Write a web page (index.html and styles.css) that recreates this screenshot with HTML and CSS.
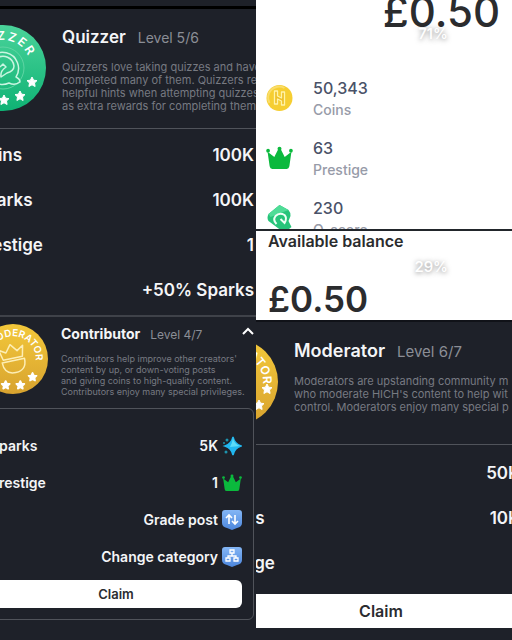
FILE: index.html
```
<!DOCTYPE html>
<html lang="en">
<head>
  <title>Levels and rewards</title>
  <meta charset="utf-8">
  <meta name="viewport" content="width=device-width, initial-scale=1">
  <link rel="stylesheet" href="styles.css">
</head>
<body>
    <svg width="0" height="0" class="sprite" aria-hidden="true">
        <defs>
            <linearGradient id="green" x1="0" y1="0" x2="0" y2="1">
                <stop offset="0" stop-color="#4ad39a"/>
                <stop offset="1" stop-color="#0fb274"/>
            </linearGradient>
            <linearGradient id="gold" x1="0" y1="0" x2="0" y2="1">
                <stop offset="0" stop-color="#f3c83a"/>
                <stop offset="1" stop-color="#d8a32f"/>
            </linearGradient>
            <linearGradient id="blue" x1="0" y1="0" x2="0" y2="1">
                <stop offset="0" stop-color="#84b6f5"/>
                <stop offset="1" stop-color="#4c86dc"/>
            </linearGradient>
            <path id="arc" d="M16.700 52.600 A28 28 0 1 1 69.300 52.600"/>
            <path id="star" d="M0 -5 L1.6 -1.8 L5 -1.4 L2.5 1 L3.1 4.5 L0 2.8 L-3.1 4.5 L-2.5 1 L-5 -1.4 L-1.6 -1.8 Z" stroke-linejoin="round"/>
            <symbol id="crown" viewBox="0 0 26 22">
                <path d="M1.500 5 L8 10 L12 2 H14 L18 10 L24.500 5 L22.500 19 Q22 21.500 20 21.500 H6 Q4 21.500 3.500 19 Z"/>
                <circle cx="2" cy="4" r="1.800"/>
                <circle cx="13" cy="2" r="1.900"/>
                <circle cx="24" cy="4" r="1.800"/>
            </symbol>
        </defs>
    </svg>

    <main class="board">
        <div class="column">
            <section class="panel quizzer">
                <header class="role">
                    <svg class="medal" viewBox="0 0 86 86" aria-hidden="true">
                        <circle cx="43" cy="43" r="43" fill="url(#green)"/>
                        <circle cx="43" cy="43" r="21" fill="none" stroke="#5fd5a4" stroke-width="1"/>
                        <text class="medal-text spaced"><textPath href="#arc" startOffset="50%" text-anchor="middle">QUIZZER</textPath></text>
                        <g fill="none" stroke="#c9f5e1" stroke-width="1.500" stroke-linejoin="round">
                            <path d="M56 52 A16 16 0 1 0 49 58 Q55 61 60 57 Q60 54 56 52 Z"/>
                            <path d="M40 42 L43 39 L46 42 Q40 46 41 52 L47 48 Q54 46 54 41 A11 11 0 1 0 38 52"/>
                        </g>
                        <g fill="#fff" stroke="#fff">
                            <use href="#star" x="15" y="57"/>
                            <use href="#star" x="26" y="71"/>
                            <use href="#star" x="44" y="75"/>
                            <use href="#star" x="60" y="71"/>
                            <use href="#star" x="72" y="57"/>
                        </g>
                    </svg>
                    <div class="role-text">
                        <div class="role-title">
                            <h2>Quizzer</h2>
                            <span class="level">Level 5/6</span>
                        </div>
                        <p>Quizzers love taking quizzes and have<br>completed many of them. Quizzers re<br>helpful hints when attempting quizzes<br>as extra rewards for completing them</p>
                    </div>
                </header>
                <ul class="rewards">
                    <li><span>Coins</span><b>100K</b></li>
                    <li><span>Sparks</span><b>100K</b></li>
                    <li><span>Prestige</span><b>1</b></li>
                    <li><span></span><b>+50% Sparks</b></li>
                </ul>
            </section>

            <section class="panel contributor">
                <header class="role">
                    <svg class="medal" viewBox="0 0 86 86" aria-hidden="true">
                        <circle cx="43" cy="43" r="43" fill="url(#gold)"/>
                        <text class="medal-text" transform="rotate(16 43 43)"><textPath href="#arc" startOffset="50%" text-anchor="middle">MODERATOR</textPath></text>
                        <g fill="none" stroke="#fdeeb5" stroke-width="1.800" stroke-linejoin="round" transform="rotate(-12 43 43)">
                            <path d="M31 42 L28 29 L36 34 L43 25 L50 34 L58 29 L55 42 Z"/>
                            <path d="M29 45 H57 Q57 60 43 60 Q29 60 29 45 Z"/>
                        </g>
                        <g fill="#fff" stroke="#fff" stroke-width="2">
                            <use href="#star" x="17" y="65"/>
                            <use href="#star" x="34" y="75"/>
                            <use href="#star" x="52" y="75"/>
                            <use href="#star" x="67" y="65"/>
                        </g>
                    </svg>
                    <div class="role-text">
                        <div class="role-title">
                            <h2>Contributor</h2>
                            <span class="level">Level 4/7</span>
                            <button class="collapse" type="button" aria-label="Collapse">
                                <svg viewBox="0 0 12 8" aria-hidden="true"><path d="M1 7 L6 2 L11 7" fill="none" stroke="#fff" stroke-width="2"/></svg>
                            </button>
                        </div>
                        <p>Contributors help improve other creators'<br>content by up, or down-voting posts<br>and giving coins to high-quality content.<br>Contributors enjoy many special privileges.</p>
                    </div>
                </header>
                <div class="card">
                    <ul class="rewards">
                        <li><span>Sparks</span><b>5K</b>
                            <svg class="icon" viewBox="0 0 20 20" aria-hidden="true">
                                <path d="M11 1 Q12.500 8 19 10 Q12.500 12 11 19 Q9.500 12 3 10 Q9.500 8 11 1 Z" fill="#22b8f0" stroke="#22b8f0" stroke-width="1.500"/>
                                <path d="M11 2 Q12 8 18 10 L8 11 Q10 8 11 2 Z" fill="#5cdcf8"/>
                                <circle cx="5" cy="4" r="1.500" fill="#1d93ad"/><circle cx="2" cy="7" r="1" fill="#1d93ad"/><circle cx="4" cy="16" r="1.500" fill="#1d93ad"/>
                            </svg>
                        </li>
                        <li><span>Prestige</span><b>1</b>
                            <svg class="icon green" aria-hidden="true"><use href="#crown"/></svg>
                        </li>
                        <li><span></span><b>Grade post</b>
                            <svg class="icon" viewBox="0 0 20 20" aria-hidden="true">
                                <path d="M3 0 H17 Q20 0 20 3 V13 Q20 17 15 18 L10 20 L5 18 Q0 17 0 13 V3 Q0 0 3 0 Z" fill="url(#blue)"/>
                                <path d="M7 14 V5 M4 8 L7 5 L10 8 M13 5 V14 M10 11 L13 14 L16 11" fill="none" stroke="#fff" stroke-width="1.600"/>
                            </svg>
                        </li>
                        <li><span></span><b>Change category</b>
                            <svg class="icon" viewBox="0 0 20 20" aria-hidden="true">
                                <path d="M3 0 H17 Q20 0 20 3 V13 Q20 17 15 18 L10 20 L5 18 Q0 17 0 13 V3 Q0 0 3 0 Z" fill="url(#blue)"/>
                                <path d="M8 3 H12 V6 H8 Z M4 11 H8 V14 H4 Z M12 11 H16 V14 H12 Z M10 6 V9 M6 11 V9 H14 V11" fill="none" stroke="#fff" stroke-width="1.300"/>
                            </svg>
                        </li>
                    </ul>
                    <button class="claim" type="button">Claim</button>
                </div>
            </section>
        </div>

        <div class="column">
            <section class="earnings">
                <strong class="total">£0.50</strong>
                <span class="percent">71%</span>
                <ul class="stats">
                    <li>
                        <svg class="stat-icon" viewBox="0 0 26 26" aria-hidden="true">
                            <circle cx="13" cy="13" r="13" fill="#f6ce31"/>
                            <path d="M3 18 A11 11 0 0 1 18 3" fill="none" stroke="#f9dd6b" stroke-width="2"/>
                            <path d="M8 6 H11 V11 L15 13 V7 H18 V20 H15 V16 L11 14 V19 H8 Z" fill="#eec02a" stroke="#fff3a8" stroke-width="1.300" stroke-linejoin="round"/>
                        </svg>
                        <div><b>50,343</b><span>Coins</span></div>
                    </li>
                    <li>
                        <svg class="stat-icon green" aria-hidden="true"><use href="#crown"/></svg>
                        <div><b>63</b><span>Prestige</span></div>
                    </li>
                    <li>
                        <svg class="stat-icon" viewBox="0 0 26 26" aria-hidden="true">
                            <path d="M13 0 L22 5 Q24 7 24 11 L22 16 L25 22 L20 26 L14 25 L2 16 Q0 13 2 9 Z" fill="#27c47a"/>
                            <path d="M13 0 L22 5 L4 12 L2 9 Z" fill="#4fdc97"/>
                            <path d="M10 19 Q6 15 9 11 Q13 7 18 10 Q21 13 18 18 L14 14" fill="none" stroke="#effff6" stroke-width="2"/>
                        </svg>
                        <div><b>230</b><span>Q-score</span></div>
                    </li>
                </ul>
            </section>

            <section class="balance">
                <h2>Available balance</h2>
                <span class="percent">29%</span>
                <strong>£0.50</strong>
            </section>

            <section class="panel moderator">
                <header class="role">
                    <svg class="medal" viewBox="0 0 86 86" aria-hidden="true">
                        <circle cx="43" cy="43" r="43" fill="url(#gold)"/>
                        <text class="medal-text" transform="rotate(16 43 43)"><textPath href="#arc" startOffset="50%" text-anchor="middle">MODERATOR</textPath></text>
                        <g fill="#fff" stroke="#fff">
                            <use href="#star" x="75" y="50"/>
                            <use href="#star" x="67" y="66"/>
                        </g>
                    </svg>
                    <div class="role-text">
                        <div class="role-title">
                            <h2>Moderator</h2>
                            <span class="level">Level 6/7</span>
                        </div>
                        <p>Moderators are upstanding community m<br>who moderate HICH's content to help wit<br>control. Moderators enjoy many special p</p>
                    </div>
                </header>
                <ul class="rewards">
                    <li><span>Coins</span><b>50K</b></li>
                    <li><span>Sparks</span><b>10K</b></li>
                    <li><span>Prestige</span></li>
                </ul>
                <button class="claim" type="button">Claim</button>
            </section>
        </div>
    </main>
</body>
</html>
```
FILE: styles.css
```
* {
    box-sizing: border-box;
}
body {
    margin: 0;
    font-family: Inter, "Liberation Sans", sans-serif;
    background: #1e2129;
}
h2, p, ul {
    margin: 0;
    padding: 0;
}
ul {
    list-style: none;
}
button {
    font-family: inherit;
    cursor: pointer;
}
.sprite {
    position: absolute;
}
.board {
    display: grid;
    grid-template-columns: 1fr 1fr;
    height: 100vh;
}
.column {
    display: flex;
    flex-direction: column;
    min-width: 0;
    min-height: 0;
    overflow: hidden;
}

/* dark role panels */
.panel {
    overflow: hidden;
    color: #f4f5f7;
    background: #1e2129;
}
.role {
    display: flex;
    align-items: flex-start;
}
.medal {
    flex: none;
    width: 86px;
    height: 86px;
}
.medal-text {
    font-size: 12px;
    font-weight: 600;
    fill: #fff;
}
.spaced {
    letter-spacing: 2px;
}
.role-text {
    flex: 1;
    white-space: nowrap;
}
.role-title {
    display: flex;
    align-items: center;
    gap: 12px;
}
.role h2 {
    font-size: 18px;
    line-height: 24px;
    font-weight: 600;
}
.level {
    font-size: 15px;
    color: #8b8e96;
}
.role p {
    margin-top: 12px;
    font-size: 11px;
    line-height: 13px;
    color: #777a82;
}
.rewards li {
    display: flex;
    align-items: center;
    height: 45px;
    font-size: 17px;
    font-weight: 600;
}
.rewards span {
    flex: 1;
}
.rewards b {
    font-weight: 600;
}
.claim {
    display: block;
    width: 100%;
    border: 0;
    font-weight: 600;
    color: #2b2c30;
    background: #fff;
}
.green {
    fill: #0bb93d;
}

.quizzer {
    flex: none;
    border-top: 3px solid #000;
    border-bottom: 2px solid #3f4249;
    margin-top: 6px;
}
.quizzer .role {
    height: 120px;
    margin-left: -40px;
    padding-top: 16px;
    gap: 16px;
    border-bottom: 1px solid #50535a;
}
.quizzer .role h2 {
    font-size: 17px;
    line-height: 24px;
}
.quizzer .level {
    font-size: 14px;
}
.quizzer .rewards {
    margin-left: -27px;
    padding: 3px 2px;
}

.contributor {
    flex: 1;
}
.contributor .role {
    height: 91px;
    margin-left: -22px;
    padding-top: 7px;
    gap: 13px;
}
.contributor .medal {
    width: 70px;
    height: 70px;
}
.contributor .role-title {
    gap: 10px;
}
.contributor .role h2 {
    font-size: 14px;
    line-height: 20px;
    font-weight: 700;
}
.contributor .level {
    font-size: 12px;
}
.contributor .role p {
    margin-top: 9px;
    font-size: 9px;
    line-height: 11px;
}
.collapse {
    margin-left: auto;
    padding: 0 2px 6px 0;
    border: 0;
    background: none;
}
.collapse svg {
    display: block;
    width: 12px;
    height: 8px;
}
.card {
    margin: 0 2px 0 -22px;
    padding: 18px 11px 11px;
    border: 1px solid #50535a;
    border-radius: 6px;
}
.card .rewards li {
    height: 37px;
    gap: 4px;
    font-size: 14px;
}
.icon {
    width: 20px;
    height: 20px;
}
.card .claim {
    margin-top: 5px;
    height: 28px;
    border-radius: 6px;
    font-size: 13px;
}

/* light money panels */
.earnings {
    position: relative;
    flex: 1;
    min-height: 0;
    overflow: hidden;
    color: #2b2c2e;
    background: #fff;
}
.total {
    display: block;
    margin-top: -8px;
    padding-right: 12px;
    text-align: right;
    font-size: 42px;
    line-height: 40px;
    font-weight: 500;
}
.percent {
    position: absolute;
    top: 24px;
    right: 64px;
    font-size: 15px;
    line-height: 20px;
    font-weight: 500;
    color: #fff;
    text-shadow: 0 1px 5px rgba(0,0,0,0.5);
}
.stats {
    padding: 45px 10px 0;
}
.stats li {
    display: flex;
    gap: 20px;
    height: 60px;
}
.stats b, .stats span {
    display: block;
    line-height: 22px;
}
.stats b {
    font-size: 16px;
    font-weight: 500;
    color: #4a5268;
}
.stats span {
    font-size: 14px;
    font-weight: 500;
    color: #979ba8;
}
.stat-icon {
    width: 27px;
    height: 26px;
    margin-top: 8px;
}
.balance {
    position: relative;
    padding: 0 12px;
    border-top: 2px solid #22262b;
    color: #2b2c2e;
    background: #fff;
}
.balance h2 {
    font-size: 16px;
    line-height: 20px;
    font-weight: 600;
}
.balance .percent {
    top: 26px;
}
.balance strong {
    display: block;
    margin-top: 27px;
    font-size: 35px;
    line-height: 42px;
    font-weight: 600;
}

.moderator {
    padding-bottom: 12px;
    border-top: 2px solid #101218;
}
.moderator .role {
    height: 123px;
    margin-left: -64px;
    padding-top: 17px;
    gap: 16px;
    border-bottom: 1px solid #50535a;
}
.moderator .rewards {
    margin: 0 -8px 0 -49px;
    padding: 5px 0 9px;
}
.moderator .claim {
    height: 34px;
    padding-right: 12px;
    font-size: 16px;
}
```
